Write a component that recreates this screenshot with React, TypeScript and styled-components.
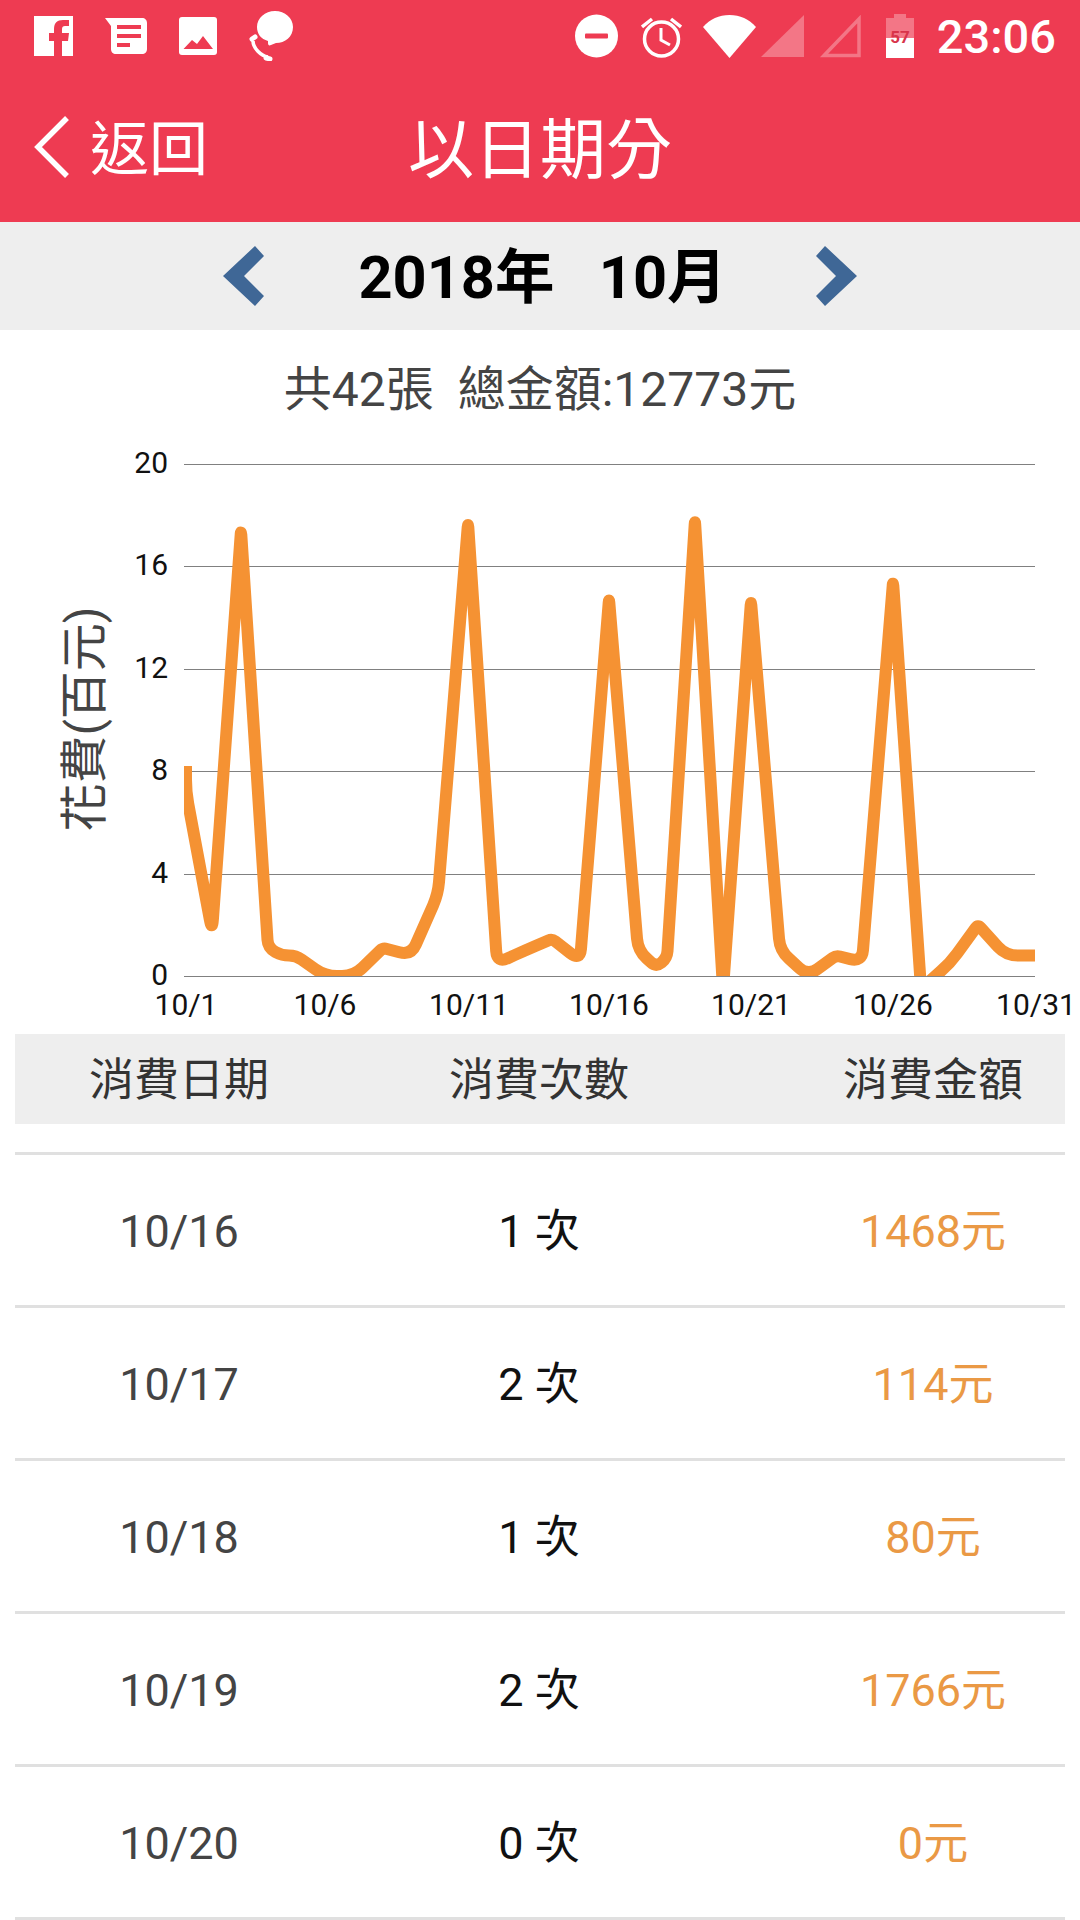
import React from "react";
import styled, { createGlobalStyle } from "styled-components";

const FONT = `Roboto, "Noto Sans CJK TC", "Noto Sans CJK SC", sans-serif`;

const Global = createGlobalStyle`
  html, body { margin: 0; padding: 0; background: #fff; }
  body { font-family: ${FONT}; width: 1080px; height: 1920px; overflow: hidden; }
`;

const Page = styled.div`
  width: 1080px;
  height: 1920px;
  display: flex;
  flex-direction: column;
  background: #fff;
  overflow: hidden;
`;
const Header = styled.header`
  height: 222px;
  background: #ee3b52;
  color: #fff;
  display: flex;
  flex-direction: column;
  flex: none;
`;
const StatusBar = styled.div`
  height: 72px;
  display: flex;
  align-items: center;
  justify-content: space-between;
  padding: 0 24px 0 34px;
`;
const IconRow = styled.div`
  display: flex;
  align-items: center;
  gap: 32px;
`;
const RightRow = styled.div`
  display: flex;
  align-items: center;
`;
const Slot = styled.span<{ $gap: number }>`
  display: flex;
  margin-left: ${(p) => p.$gap}px;
`;
const Clock = styled.span`
  font-size: 47px;
  font-weight: 500;
  margin-left: 23px;
  line-height: 1;
`;
const NavBar = styled.div`
  flex: 1;
  display: grid;
  grid-template-columns: 1fr auto 1fr;
  align-items: center;
  padding-left: 34px;
`;
const Back = styled.div`
  display: flex;
  align-items: center;
  gap: 21px;
  font-size: 59px;
  line-height: 62px;
`;
const BackLabel = styled.span`
  padding-top: 5px;
`;
const Title = styled.div`
  font-size: 66px;
  line-height: 72px;
  padding-top: 7px;
  position: relative;
  left: -17px;
`;
const MonthBar = styled.div`
  height: 108px;
  background: #eeeeee;
  display: flex;
  align-items: center;
  justify-content: center;
  gap: 94px;
  flex: none;
`;
const MonthLabel = styled.div`
  font-size: 59.5px;
  line-height: 64px;
  font-weight: 700;
  color: #000;
  text-align: center;
  white-space: pre;
  padding-top: 4px;
  margin-right: -5px;
`;
const Summary = styled.div`
  height: 116px;
  display: flex;
  align-items: center;
  justify-content: center;
  font-size: 48px;
  line-height: 60px;
  color: #444;
  white-space: pre;
  flex: none;
  padding-top: 4px;
  box-sizing: border-box;
`;
const ChartWrap = styled.div`
  height: 588px;
  flex: none;
`;
const TableHead = styled.div`
  margin: 0 15px;
  height: 90px;
  box-sizing: border-box;
  padding-top: 4px;
  background: #eeeeee;
  display: grid;
  grid-template-columns: 328px 392px 396px;
  align-items: center;
  text-align: center;
  font-size: 45px;
  line-height: 60px;
  color: #333;
  flex: none;
`;
const Rows = styled.div`
  margin: 28px 15px 0;
  border-top: 3px solid #e0e0e0;
`;
const Row = styled.div`
  height: 146px;
  padding-top: 4px;
  border-bottom: 3px solid #e0e0e0;
  display: grid;
  grid-template-columns: 328px 392px 396px;
  align-items: center;
  text-align: center;
  font-size: 45px;
  line-height: 60px;
`;
const DateCell = styled.div`
  color: #444;
`;
const CountCell = styled.div`
  color: #111;
`;
const AmountCell = styled.div`
  color: #ea9945;
`;

const Facebook = () => (
  <svg width="39" height="40" viewBox="0 0 39 40">
    <path fill="#fff" d="M0 0h39v40H28V25h6l1-8h-7v-4c0-2 1-3 3-3h4V4h-6c-6 0-9 3-9 9v4h-5v8h5v15H0z" />
  </svg>
);
const Message = () => (
  <svg width="42" height="36" viewBox="0 0 42 36">
    <path fill="#fff" d="M0 0h37c3 0 5 2 5 5v26c0 3-2 5-5 5H11c-3 0-5-2-5-5V8z" />
    <path fill="#ee3b52" d="M12 7h24v4H12zM12 16h24v4H12zM12 25h13v4H12z" />
  </svg>
);
const Picture = () => (
  <svg width="38" height="38" viewBox="0 0 38 38">
    <rect width="38" height="38" rx="3" fill="#fff" />
    <path fill="#ee3b52" d="M4.5 32l8.500-9 5 4 6-8 10 13z" />
  </svg>
);
const ChatPhone = () => (
  <svg width="45" height="50" viewBox="0 0 45 50">
    <path fill="#fff" d="M26 0c10 0 18 7 18 16 0 10-8 16-17 16l-5 2c-2 1-3 0-3-2v-2C12 28 8 23 8 16 8 7 16 0 26 0z" />
    <path fill="none" stroke="#fff" strokeWidth="3.500" d="M4 30C4 37 12 45 19 46" />
    <path fill="none" stroke="#fff" strokeWidth="5" strokeLinecap="round" d="M3 28l3-2M17 47l4 1" />
  </svg>
);
const Dnd = () => (
  <svg width="43" height="44" viewBox="0 0 43 44">
    <circle cx="21.500" cy="22" r="21.500" fill="#fff" />
    <rect x="10" y="19.500" width="23" height="5" rx="1" fill="#ee3b52" />
  </svg>
);
const Alarm = () => (
  <svg width="41" height="44" viewBox="0 0 41 44" fill="none" stroke="#fff" strokeWidth="3.500">
    <circle cx="20.500" cy="25" r="17" />
    <path d="M20 14v12l9 5" strokeWidth="3" />
    <path d="M1 13l10-8M40 13l-10-8" />
  </svg>
);
const Wifi = () => (
  <svg width="53" height="43" viewBox="0 0 53 43">
    <path fill="#fff" d="M0 12C7 4 16 0 26.500 0S46 4 53 12L26.500 43z" />
  </svg>
);
const SignalFilled = () => (
  <svg width="43" height="43" viewBox="0 0 43 43">
    <path fill="#fff" fillOpacity="0.3" d="M0 42L43 0v42z" />
  </svg>
);
const SignalOutline = () => (
  <svg width="42" height="43" viewBox="0 0 42 43">
    <path fill="none" stroke="#fff" strokeOpacity="0.3" strokeWidth="3.500" d="M5 40.500L40 4v36.500z" />
  </svg>
);
const Battery = () => (
  <svg width="28" height="44" viewBox="0 0 28 44">
    <path fill="#fff" fillOpacity="0.3" d="M8 0h12v4h8v20H0V4h8z" />
    <path fill="#fff" d="M0 24h28v20H0z" />
    <text x="14" y="29" textAnchor="middle" fontSize="17" fontWeight="700" fontFamily="Roboto" fill="#d8344a">57</text>
  </svg>
);
const BackChevron = () => (
  <svg width="35" height="62" viewBox="0 0 35 62" fill="none" stroke="#fff" strokeWidth="5.500">
    <path d="M33 2L4 31l29 29" />
  </svg>
);
const Chevron = ({ dir }: { dir: "left" | "right" }) => (
  <svg width="41" height="60" viewBox="0 0 41 60">
    <path fill="#3f6796" d={dir === "left" ? "M32 0l9 10-20 20 20 20-9 10L0 30z" : "M9 0L0 10l20 20L0 50l9 10 32-30z"} />
  </svg>
);

const PLOT = { l: 184, r: 1035, t: 18, b: 530 };
const vals = [8.2, 7.2, 1.75, 17.4, 1.1, 0.8, 0.8, 0, 0, 1.1, 0.8, 3.2, 17.7, 0.5, 1, 1.45, 0.6, 14.75, 1, 0.35, 0.7, 17.8, -0.5, 14.65, 1, 0, 0.8, 0.55, 15.4, -0.5, 0.5, 2, 0.8, 0.8];
const xs = [186, 186, 212, 241, 268, 282, 296, 325, 354, 383, 411, 438, 468, 497, 525, 552, 580, 609, 638, 656, 667, 695, 723, 751, 780, 808, 836, 862, 893, 921, 950, 978, 1006, 1038];
const xTicks = ["10/1", "10/6", "10/11", "10/16", "10/21", "10/26", "10/31"];
const xTickX = [186, 325, 469, 609, 751, 893, 1036];
const yOf = (v: number) => PLOT.b - (v / 20) * (PLOT.b - PLOT.t);

const roundedPath = () => {
  const pts = vals.map((v, i) => [xs[i], yOf(v)]);
  let d = `M${pts[0][0]} ${pts[0][1]}`;
  for (let i = 1; i < pts.length - 1; i++) {
    const [px, py] = pts[i - 1];
    const [x, y] = pts[i];
    const [nx, ny] = pts[i + 1];
    const l1 = Math.hypot(x - px, y - py);
    const l2 = Math.hypot(nx - x, ny - y);
    const isPeak = y < py && y < ny;
    const r = Math.min(isPeak ? 4 : 12, l1 / 2, l2 / 2);
    if (r === 0 || l1 === 0) {
      d += ` L${x} ${y}`;
      continue;
    }
    const ax = x - ((x - px) / l1) * r;
    const ay = y - ((y - py) / l1) * r;
    const bx = x + ((nx - x) / l2) * r;
    const by = y + ((ny - y) / l2) * r;
    d += ` L${ax.toFixed(1)} ${ay.toFixed(1)} Q${x} ${y.toFixed(1)} ${bx.toFixed(1)} ${by.toFixed(1)}`;
  }
  const last = pts[pts.length - 1];
  return `${d} L${last[0]} ${last[1]}`;
};

const Chart = () => (
  <svg width="1080" height="588" viewBox="0 0 1080 588">
    <defs>
      <clipPath id="plot">
        <rect x={PLOT.l} y={0} width={PLOT.r - PLOT.l} height={PLOT.b} />
      </clipPath>
    </defs>
    {[0, 4, 8, 12, 16, 20].map((v) => (
      <g key={v}>
        <line x1={PLOT.l} x2={PLOT.r} y1={Math.round(yOf(v)) + 0.5} y2={Math.round(yOf(v)) + 0.5} stroke="#808080" strokeWidth="1" />
        <text x="168" y={yOf(v) + 9} textAnchor="end" fontSize="30" fontFamily="Roboto" fill="#111">{v}</text>
      </g>
    ))}
    <path d={roundedPath()} fill="none" stroke="#f59233" strokeWidth="12" strokeLinejoin="round" clipPath="url(#plot)" />
    {xTicks.map((t, i) => (
      <text key={t} x={xTickX[i]} y="569" textAnchor="middle" fontSize="30" fontFamily="Roboto" fill="#111">{t}</text>
    ))}
    <text transform="translate(101,273) rotate(-90)" textAnchor="middle" fontSize="48" fontFamily={FONT} fill="#444">花費(百元)</text>
  </svg>
);

const data = [
  ["10/16", "1 次", "1468元"],
  ["10/17", "2 次", "114元"],
  ["10/18", "1 次", "80元"],
  ["10/19", "2 次", "1766元"],
  ["10/20", "0 次", "0元"],
];

export default function App() {
  return (
    <Page>
      <Global />
      <Header>
        <StatusBar>
          <IconRow>
            <Facebook />
            <Message />
            <Picture />
            <ChatPhone />
          </IconRow>
          <RightRow>
            <Slot $gap={0}><Dnd /></Slot>
            <Slot $gap={23}><Alarm /></Slot>
            <Slot $gap={21}><Wifi /></Slot>
            <Slot $gap={5}><SignalFilled /></Slot>
            <Slot $gap={15}><SignalOutline /></Slot>
            <Slot $gap={25}><Battery /></Slot>
            <Clock>23:06</Clock>
          </RightRow>
        </StatusBar>
        <NavBar>
          <Back>
            <BackChevron />
            <BackLabel>返回</BackLabel>
          </Back>
          <Title>以日期分</Title>
          <span />
        </NavBar>
      </Header>
      <MonthBar>
        <Chevron dir="left" />
        <MonthLabel>2018年   10月</MonthLabel>
        <Chevron dir="right" />
      </MonthBar>
      <Summary>共42張  總金額:12773元</Summary>
      <ChartWrap>
        <Chart />
      </ChartWrap>
      <TableHead>
        <div>消費日期</div>
        <div>消費次數</div>
        <div>消費金額</div>
      </TableHead>
      <Rows>
        {data.map((d) => (
          <Row key={d[0]}>
            <DateCell>{d[0]}</DateCell>
            <CountCell>{d[1]}</CountCell>
            <AmountCell>{d[2]}</AmountCell>
          </Row>
        ))}
      </Rows>
    </Page>
  );
}
